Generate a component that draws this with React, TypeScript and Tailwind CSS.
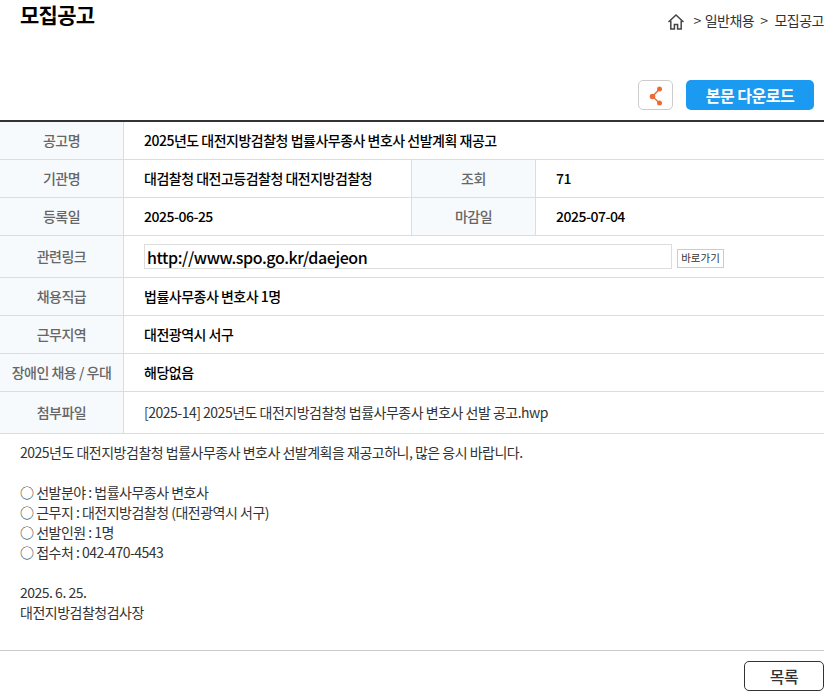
import type { ReactNode } from "react";

const font = { fontFamily: '"Noto Sans CJK KR", sans-serif' };

function Label({ children }: { children: ReactNode }) {
  return (
    <div className="flex w-[124px] shrink-0 items-center justify-center border-r border-[#dddddd] bg-[#f7fafd] text-[14px] font-medium tracking-[-0.5px] text-[#666666]">
      {children}
    </div>
  );
}

function Row({ h, children }: { h: string; children: ReactNode }) {
  return <div className={`flex border-b border-[#dddddd] ${h}`}>{children}</div>;
}

function Value({ children, className = "flex-1" }: { children: ReactNode; className?: string }) {
  return (
    <div className={`flex items-center pl-5 text-[14px] font-medium tracking-[-0.5px] text-black ${className}`}>
      {children}
    </div>
  );
}

export default function App() {
  return (
    <div className="h-[691px] w-[824px] overflow-hidden bg-white" style={font}>
      <div className="flex h-[80px] items-start justify-between">
        <h1 className="pl-5 text-[21px] leading-[28px] font-bold tracking-[-0.75px] text-black">모집공고</h1>
        <div className="mt-[8px] flex shrink-0 items-center whitespace-nowrap text-[14px] leading-6 tracking-[-0.5px] text-[#333333]">
          <svg width="18" height="18" viewBox="0 0 18 18" fill="none" stroke="#444444" strokeWidth="1.5" className="mt-[4px] mr-[8px]">
            <path d="M1.5 9 9 2l7.5 7" />
            <path d="M3.8 7.5V16h3.6v-4.5h3.2V16h3.6V7.5" />
          </svg>
          <span>&gt;</span>
          <span className="ml-[4px]">일반채용</span>
          <span className="ml-[6px]">&gt;</span>
          <span className="ml-[7px]">모집공고</span>
        </div>
      </div>

      <div className="flex h-[40px] items-start justify-end gap-[13px] pr-[10px]">
        <button className="flex h-[30px] w-[35px] items-center justify-center rounded-[5px] border border-[#cccccc] bg-white">
          <svg width="16" height="24" viewBox="0 0 16 24" fill="#ee6c33" stroke="#ee6c33">
            <path d="M11.5 6 4.5 13.5l7 6.5" fill="none" strokeWidth="1.4" />
            <circle cx="11.5" cy="6" r="2.5" stroke="none" />
            <circle cx="4.5" cy="13.5" r="2.8" stroke="none" />
            <circle cx="11.5" cy="20" r="2.5" stroke="none" />
          </svg>
        </button>
        <button className="h-[30px] w-[128px] rounded-[5px] bg-[#1a9af0] text-[16px] font-bold tracking-[-0.5px] text-white">
          본문 다운로드
        </button>
      </div>

      <div className="border-t-2 border-[#333333]">
        <Row h="h-[38px]">
          <Label>공고명</Label>
          <Value>2025년도 대전지방검찰청 법률사무종사 변호사 선발계획 재공고</Value>
        </Row>
        <Row h="h-[38px]">
          <Label>기관명</Label>
          <Value className="w-[288px] border-r border-[#dddddd]">대검찰청 대전고등검찰청 대전지방검찰청</Value>
          <Label>조회</Label>
          <Value>71</Value>
        </Row>
        <Row h="h-[38px]">
          <Label>등록일</Label>
          <Value className="w-[288px] border-r border-[#dddddd]">2025-06-25</Value>
          <Label>마감일</Label>
          <Value>2025-07-04</Value>
        </Row>
        <Row h="h-[42px]">
          <Label>관련링크</Label>
          <div className="flex flex-1 items-center pl-5">
            <div className="flex h-[25px] w-[528px] items-center border border-[#dddddd] pl-[2px] text-[16px] font-medium tracking-[-0.4px] text-black">
              http://www.spo.go.kr/daejeon
            </div>
            <button className="mt-[3px] ml-[5px] flex h-[19px] w-[47px] items-center justify-center border border-[#cccccc] text-[10.5px] text-[#333333]">
              바로가기
            </button>
          </div>
        </Row>
        <Row h="h-[38px]">
          <Label>채용직급</Label>
          <Value>법률사무종사 변호사 1명</Value>
        </Row>
        <Row h="h-[38px]">
          <Label>근무지역</Label>
          <Value>대전광역시 서구</Value>
        </Row>
        <Row h="h-[38px]">
          <Label>장애인 채용 / 우대</Label>
          <Value>해당없음</Value>
        </Row>
        <Row h="h-[42px]">
          <Label>첨부파일</Label>
          <div className="flex flex-1 items-center pl-5 text-[14px] tracking-[-0.5px] text-[#333333]">
            [2025-14] 2025년도 대전지방검찰청 법률사무종사 변호사 선발 공고.hwp
          </div>
        </Row>
      </div>

      <div className="h-[217px] border-b border-[#cccccc] pt-2 pl-5 text-[14px] leading-[20px] tracking-[-0.5px] text-[#333333]">
        <p>2025년도 대전지방검찰청 법률사무종사 변호사 선발계획을 재공고하니, 많은 응시 바랍니다.</p>
        <p className="mt-5">○ 선발분야 : 법률사무종사 변호사</p>
        <p>○ 근무지 : 대전지방검찰청 (대전광역시 서구)</p>
        <p>○ 선발인원 : 1명</p>
        <p>○ 접수처 : 042-470-4543</p>
        <p className="mt-5">2025. 6. 25.</p>
        <p>대전지방검찰청검사장</p>
      </div>

      <div className="flex justify-end pt-[10px]">
        <button className="h-[30px] w-[80px] rounded-[5px] border border-[#333333] bg-white text-[16px] font-medium tracking-[-0.5px] text-[#333333]">
          목록
        </button>
      </div>
    </div>
  );
}
